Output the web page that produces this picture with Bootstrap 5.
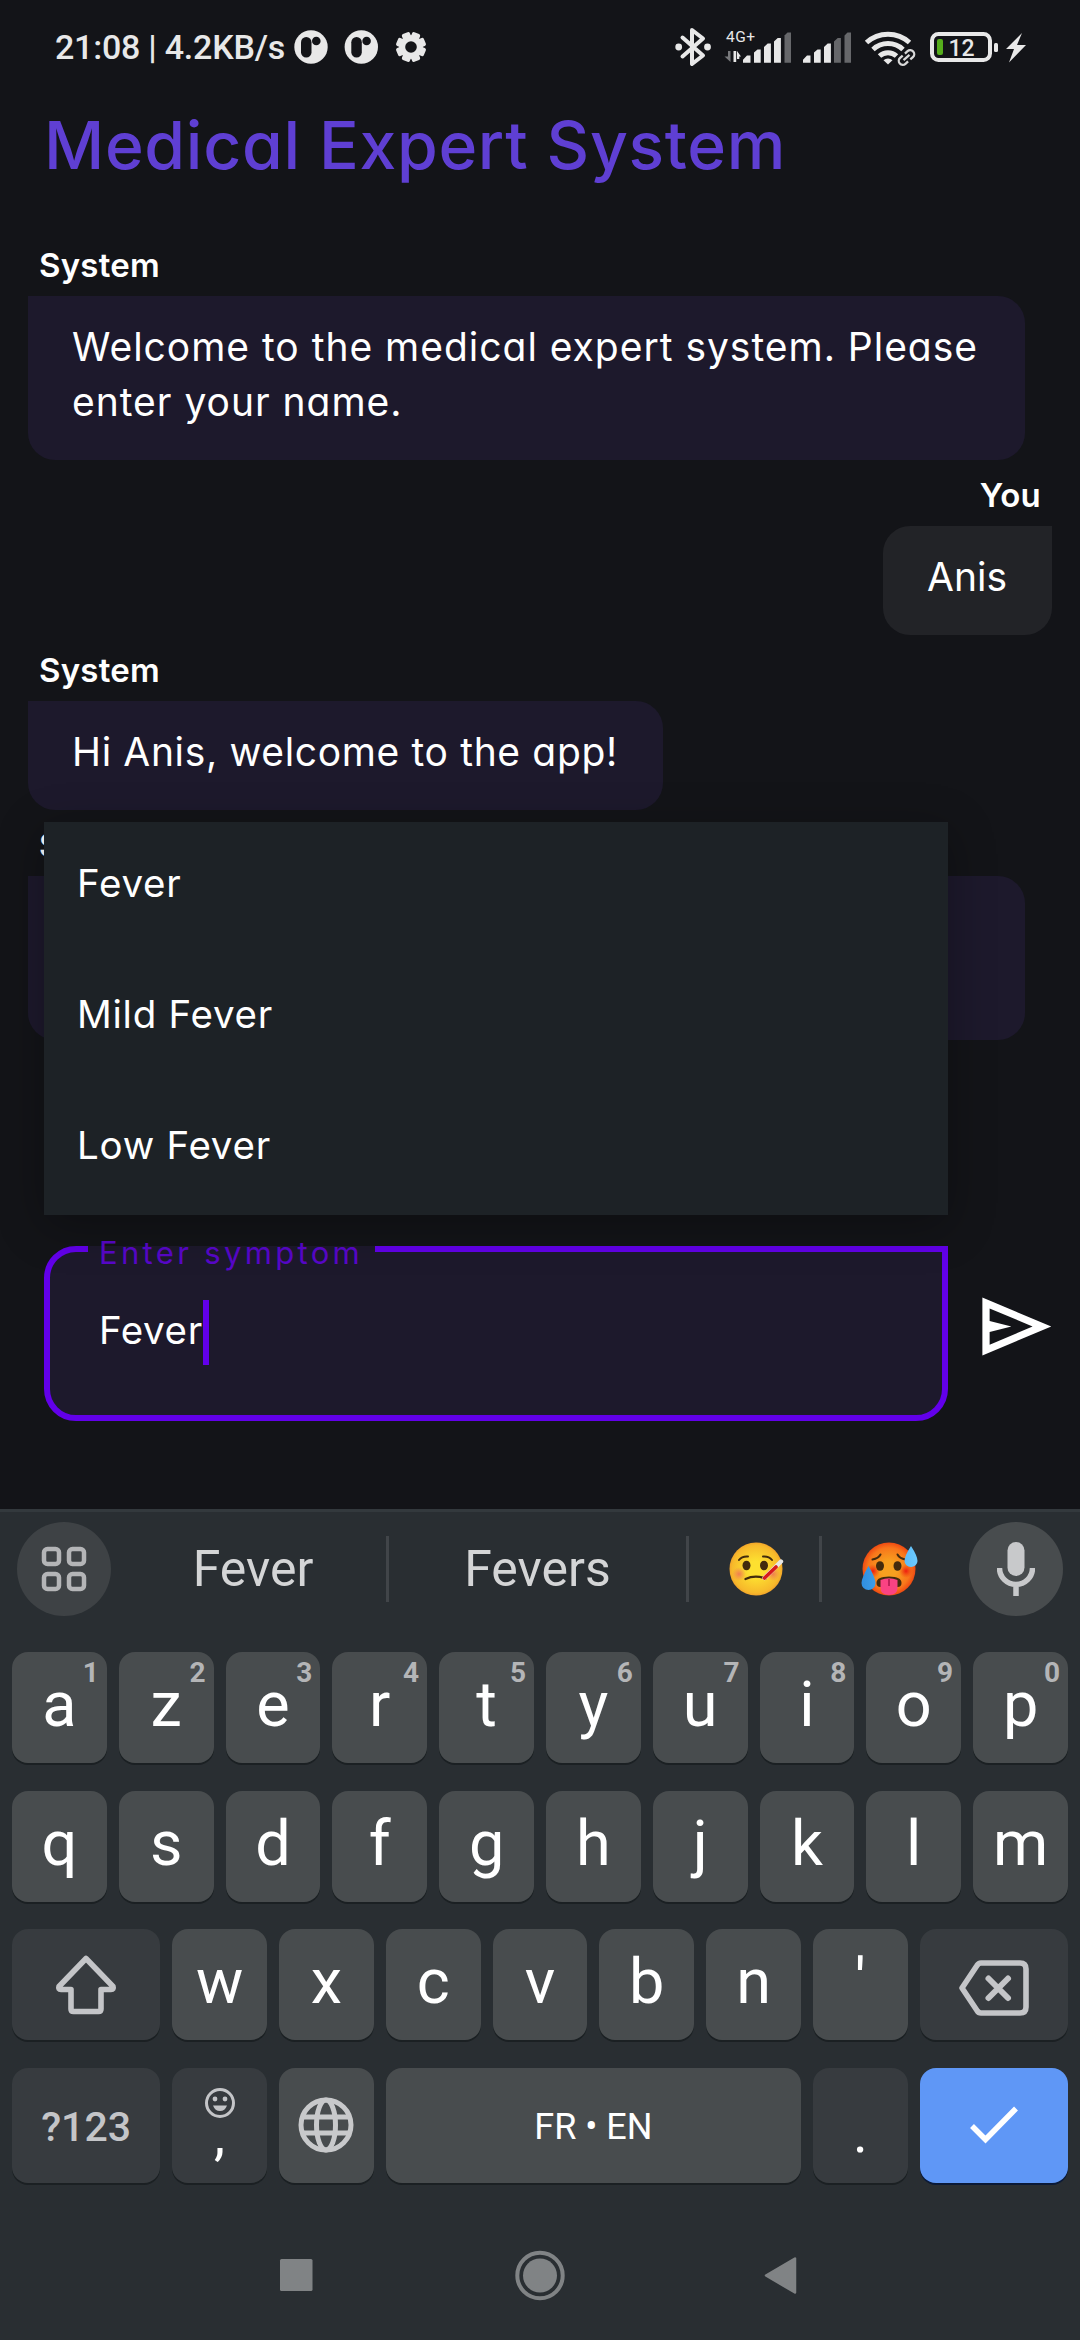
<!DOCTYPE html>
<html lang="en">
<head>
<meta charset="utf-8">
<meta name="viewport" content="width=device-width, initial-scale=1">
<title>Medical Expert System</title>
<link href="https://cdn.jsdelivr.net/npm/bootstrap@5.3.0/dist/css/bootstrap.min.css" rel="stylesheet">
<style>
body{background:#131418;color:#fff;font-family:Roboto,sans-serif}
.phone{width:1080px;height:2340px;overflow:hidden}
.geo{font-family:Inter,sans-serif;font-feature-settings:"cv11" 1;white-space:nowrap}
.status{height:94px;color:#e8e8e8;font-size:34px;font-weight:500;line-height:40px;padding-left:55px;letter-spacing:-.23px}
.app-title{font-size:66px;line-height:80px;font-weight:500;color:#5f3fd3;padding:11px 0 0 44px;height:150px;letter-spacing:.68px}
.who{font-size:33px;line-height:42px;font-weight:600;padding:0 11px;margin-bottom:10px;letter-spacing:.24px}
.bubble{font-size:39px;line-height:55px;padding:23px 44px 31px;margin-bottom:14px;background:#1d192c;border-radius:0 27px 27px 27px;letter-spacing:.98px}
.bubble.full{width:997px;min-height:164px}
.bubble.hi{width:635px;letter-spacing:.65px}
.bubble.mine{width:169px;background:#222327;border-radius:27px 0 27px 27px;letter-spacing:0}
.chat{padding:0 28px;height:1002px}
.suggest{left:44px;top:822px;width:904px;height:393px;background:#1d2226;box-shadow:0 10px 44px rgba(0,0,0,.3);z-index:2}
.suggest div{height:131px;padding:34px 33px;font-size:38.5px;line-height:55px;letter-spacing:.74px}
.composer{padding-left:44px;height:263px}
.composer svg{margin:37px 0 0 23px}
.field{width:904px;height:175px;border:6px solid #6200ea;border-radius:32px 0 32px 32px;background:#1d192c;padding:48px 49px;font-size:38.5px;line-height:61px;letter-spacing:.6px}
.field-label{left:38px;top:-19px;width:287px;padding-left:11px;font-size:31px;line-height:39px;letter-spacing:3.33px;color:#5807c9;background:linear-gradient(transparent 13px,#1d192c 13px,#1d192c 19px,transparent 19px)}
.caret{width:6px;height:65px;background:#6200ea}
.keyboard{height:831px;background:#292e32;border-top:3px solid #33393d}
.strip{height:140px;padding:10px 17px 0}
.round{width:94px;height:94px;background:#3e4245}
.voice{background:#484c4e}
.sep{width:3px;height:66px;background:#414549}
.word{font-size:50px;color:#d4d5d6;line-height:98px}
.word-1{width:275px;padding-left:9px}
.word-2{width:297px}
.keys{padding:0 12px}
.krow{gap:12px;height:111px;margin-bottom:27.5px}
.krow.tall{height:115px}
.key{width:94.8px;background:#484c4e;border-radius:16px;box-shadow:0 2px 0 #1b2023;font-size:63px;line-height:106px}
.dim{background:#373b3f}
.wide{width:148.2px}
.num{right:8px;top:5px;font-size:28px;line-height:32px;font-weight:700;color:#b4b5b7}
.go{background:#5f97f6;box-shadow:0 2px 0 #0b1a38}
.sym{font-size:41px;font-weight:500;line-height:118px;color:#c4c5c8}
.comma{font-size:56px;line-height:60px}
.comma svg{margin-top:19px}
.comma span{margin-top:-14px}
.space{font-size:36px;line-height:119px}
.dot{font-size:56px;line-height:130px}
.navbtns{padding-top:35px}
svg{display:block;flex:none}
</style>
</head>
<body>
<div class="phone position-relative d-flex flex-column">
  <header class="status d-flex align-items-center">
    <span class="text-nowrap">21:08 | 4.2KB/s</span>
    <svg class="position-absolute top-0 start-0" width="1080" height="94" viewBox="0 0 1080 94" fill="#e8e8e8" letter-spacing="0">
      <g id="app"><circle cx="311" cy="47" r="16.7"/><rect x="301" y="37" width="10.5" height="20.5" rx="5.2" fill="#131418"/><circle cx="316.3" cy="41" r="4.3" fill="#131418"/></g>
      <use href="#app" x="50.3"/>
      <g transform="translate(411 47)"><circle r="8.3" fill="none" stroke="#e8e8e8" stroke-width="7"/><rect x="-4.3" y="-15" width="8.6" height="30" rx="1.8" transform="rotate(22.5)"/><rect x="-4.3" y="-15" width="8.6" height="30" rx="1.8" transform="rotate(67.5)"/><rect x="-4.3" y="-15" width="8.6" height="30" rx="1.8" transform="rotate(112.5)"/><rect x="-4.3" y="-15" width="8.6" height="30" rx="1.8" transform="rotate(157.5)"/><circle r="5.8" fill="#131418"/></g>
      <path d="M682.5 37.5 703 55.500 692 64V30L703 38.500 682.5 56.500" fill="none" stroke="#e8e8e8" stroke-width="4" stroke-linejoin="round" stroke-linecap="round"/>
      <circle cx="678.700" cy="47" r="3.400"/><circle cx="707.500" cy="47" r="3.400"/>
      <text x="726" y="42" font-size="15.500" font-weight="400" textLength="29">4G+</text>
      <path d="M728 51h2.500v11L724.500 56.500H728z" fill="#77787b"/><path d="M733.500 51h2.700v11h-2.700zM737 51l4 5.500h-1.700V59H737z"/>
      <path d="M743 62.700v-3l4-4.200h3.500v7.200zM754 62.700V52.500l3.500-3h3.200v13.200zM764 62.700V47l3.700-3.500h3.200v19.200zM774 62.700V41.500l3.700-3.500h3.200v24.700z"/>
      <path d="M784.500 62.700V35.500l3-3h3.500v30.200z" fill="#66676a"/>
      <path d="M803 62.700v-3l4-4.200h3.500v7.200zM814 62.700V52.500l3.500-3h3.200v13.200zM824 62.700V47l3.700-3.500h3.200v19.200z"/>
      <path d="M834 62.700V41.500l3.700-3.500h3.200v24.700zM844.500 62.700V35.500l3-3h3.500v30.200z" fill="#66676a"/>
      <g fill="none" stroke="#e8e8e8" stroke-width="5"><path d="M866.500 42.500a32 32 0 0 1 43 0"/><path d="M873 49.500a22 22 0 0 1 30 0"/><path d="M879.500 56a12.500 12.500 0 0 1 17 0"/></g>
      <path d="M888 64.500l-4.500-4.200a6.500 6.500 0 0 1 9 0z"/>
      <g transform="translate(906.5 57.5) rotate(-42)"><rect x="-11" y="-6" width="22" height="12" rx="6" fill="#131418"/><g fill="none" stroke="#d8d8d8" stroke-width="2.300"><path d="M-1.500-4h-3.500a4 4 0 0 0 0 8h3.500M1.500-4h3.500a4 4 0 0 1 0 8h-3.500M-4 0h8"/></g></g>
      <rect x="932" y="34" width="58" height="26" rx="6.500" fill="none" stroke="#e8e8e8" stroke-width="4"/>
      <rect x="937" y="39" width="6" height="16" rx="2" fill="#56ae1c"/><rect x="994" y="43" width="4" height="9" rx="1.500"/>
      <text x="948.500" y="55.700" font-size="23" font-weight="500" textLength="26">12</text>
      <path d="M1022 33l-16 16h8l-5 13.500 17-17.500h-9z"/>
    </svg>
  </header>
  <h1 class="app-title geo m-0">Medical Expert System</h1>

  <main class="chat d-flex flex-column align-items-start">
    <div class="who geo">System</div>
    <div class="bubble full geo">Welcome to the medical expert system. Please<br>enter your name.</div>
    <div class="who geo align-self-end">You</div>
    <div class="bubble mine geo align-self-end">Anis</div>
    <div class="who geo">System</div>
    <div class="bubble hi geo">Hi Anis, welcome to the app!</div>
    <div class="who geo">S</div>
    <div class="bubble full geo"></div>
  </main>

  <div class="suggest geo position-absolute">
    <div>Fever</div>
    <div>Mild Fever</div>
    <div>Low Fever</div>
  </div>

  <section class="composer d-flex">
    <div class="field geo position-relative d-flex">
      <span class="field-label position-absolute">Enter symptom</span>
      <span>Fever</span><span class="caret"></span>
    </div>
    <svg width="88" height="87" viewBox="0 0 24 24" fill="#fff"><path d="M3 20V4l19 8zm2-3 11.850-5L5 7v3.500l6 1.500-6 1.500z"/></svg>
  </section>

  <section class="keyboard">
    <div class="strip d-flex align-items-start">
      <div class="round rounded-circle d-flex align-items-center justify-content-center">
        <svg width="46" height="46" fill="none" stroke="#b4b5b7" stroke-width="4.500"><rect x="3" y="3" width="15" height="15" rx="3.500"/><rect x="28" y="3" width="15" height="15" rx="3.500"/><rect x="3" y="28" width="15" height="15" rx="3.500"/><rect x="28" y="28" width="15" height="15" rx="3.500"/></svg>
      </div>
      <div class="d-flex align-items-center" style="height:94px">
        <div class="word word-1 text-center">Fever</div><div class="sep"></div>
        <div class="word word-2 text-center">Fevers</div><div class="sep"></div>
        <svg style="margin:0 35px 0 39px" width="56" height="56" viewBox="0 0 56 56">
          <defs><radialGradient id="y"><stop offset=".3" stop-color="#fde030"/><stop offset=".9" stop-color="#f7b92b"/><stop offset="1" stop-color="#f2a52a"/></radialGradient><radialGradient id="b"><stop offset="0" stop-color="#ee6b5a" stop-opacity=".8"/><stop offset="1" stop-color="#ee7a5a" stop-opacity="0"/></radialGradient></defs>
          <circle cx="28" cy="28" r="26.500" fill="url(#y)"/><circle cx="11" cy="33" r="7" fill="url(#b)"/><circle cx="45" cy="33" r="7" fill="url(#b)"/>
          <ellipse cx="18.500" cy="24.500" rx="4" ry="4.800" fill="#422b0d"/><ellipse cx="36" cy="24.500" rx="4" ry="4.800" fill="#422b0d"/>
          <path d="M11 19q3-4 9-3.500M35 15.500q6-.5 9 3.500" fill="none" stroke="#422b0d" stroke-width="2" stroke-linecap="round"/>
          <path d="M17.500 38q9.500-4.500 20-.5" fill="none" stroke="#422b0d" stroke-width="2.300" stroke-linecap="round"/>
          <path d="M36.500 37 53 20.500" stroke="#e6e6e6" stroke-width="4.400" stroke-linecap="round"/><path d="M36.500 37 48 26" stroke="#d81b1b" stroke-width="3.600" stroke-linecap="round"/>
        </svg>
        <div class="sep"></div>
        <svg style="margin:0 51px 0 39px" width="57" height="56" viewBox="0 0 57 56">
          <defs><radialGradient id="r"><stop offset=".3" stop-color="#f7a01f"/><stop offset=".8" stop-color="#f8761b"/><stop offset="1" stop-color="#ee4a12"/></radialGradient><radialGradient id="c"><stop offset="0" stop-color="#ee1c10"/><stop offset="1" stop-color="#f03a10" stop-opacity="0"/></radialGradient><linearGradient id="d" x2="1"><stop offset="0" stop-color="#2f8ee0"/><stop offset="1" stop-color="#6ccbff"/></linearGradient></defs>
          <circle cx="28" cy="28" r="26.500" fill="url(#r)"/><circle cx="12" cy="30" r="7" fill="url(#c)"/><circle cx="45" cy="30" r="7" fill="url(#c)"/>
          <ellipse cx="19" cy="25" rx="4" ry="4.800" fill="#422b0d"/><ellipse cx="36.500" cy="25" rx="4" ry="4.800" fill="#422b0d"/>
          <path d="M11.500 18.500q6-1 8-5M36.500 13.500q2 4 8 5" fill="none" stroke="#422b0d" stroke-width="2" stroke-linecap="round"/>
          <path d="M15.500 42q0-6.500 12.500-6.500t12.500 6.500q0 4-4 4h-17q-4 0-4-4z" fill="#422b0d"/><path d="M19.500 39q8.500-3.500 17 0v8q0 7-8.500 7t-8.500-7z" fill="#fa4383"/><path d="M28 38v7" stroke="#b01a50" stroke-width="1.600"/>
          <path d="M7.500 25q7 12 7 17a7 7 0 0 1-14 0q0-5 7-17zM50 5q6.500 10 6.500 15a6.500 6 0 0 1-13 0q0-5 6.500-15z" fill="url(#d)"/>
        </svg>
      </div>
      <div class="round voice rounded-circle d-flex align-items-center justify-content-center">
        <svg width="38" height="54" viewBox="0 0 38 54"><rect x="10.500" width="17" height="34" rx="8.500" fill="#c8c9cb"/><path d="M2.500 26a16.500 16.500 0 0 0 33 0M19 43v11" fill="none" stroke="#c8c9cb" stroke-width="5.500"/></svg>
      </div>
    </div>
    <div class="keys text-center">
      <div class="krow d-flex">
        <div class="key position-relative">a<span class="num position-absolute">1</span></div><div class="key position-relative">z<span class="num position-absolute">2</span></div><div class="key position-relative">e<span class="num position-absolute">3</span></div><div class="key position-relative">r<span class="num position-absolute">4</span></div><div class="key position-relative">t<span class="num position-absolute">5</span></div><div class="key position-relative">y<span class="num position-absolute">6</span></div><div class="key position-relative">u<span class="num position-absolute">7</span></div><div class="key position-relative">i<span class="num position-absolute">8</span></div><div class="key position-relative">o<span class="num position-absolute">9</span></div><div class="key position-relative">p<span class="num position-absolute">0</span></div>
      </div>
      <div class="krow d-flex">
        <div class="key">q</div><div class="key">s</div><div class="key">d</div><div class="key">f</div><div class="key">g</div><div class="key">h</div><div class="key">j</div><div class="key">k</div><div class="key">l</div><div class="key">m</div>
      </div>
      <div class="krow d-flex">
        <div class="key dim wide d-flex justify-content-center"><svg width="62" height="62" viewBox="0 0 62 62" style="margin-top:25px" fill="none" stroke="#c4c5c8" stroke-width="5.600" stroke-linejoin="round"><path d="M31 4.500 58 32.500q1 3-2 3H46V55q0 2.500-2.500 2.500h-25Q16 57.500 16 55V35.500H6q-3 0-2-3z"/></svg></div>
        <div class="key">w</div><div class="key">x</div><div class="key">c</div><div class="key">v</div><div class="key">b</div><div class="key">n</div><div class="key">'</div>
        <div class="key dim wide d-flex justify-content-center"><svg width="70" height="56" viewBox="0 0 70 56" style="margin-top:31px" fill="none" stroke="#c4c5c8" stroke-width="5.600" stroke-linejoin="round"><path d="M22 3H61q6 0 6 6V47q0 6-6 6H22q-2.500 0-4-2.500L3 28 18 5.500Q19.500 3 22 3z"/><path d="M29.500 18.500 49 38M49 18.500 29.500 38" stroke-linecap="round" stroke-width="6"/></svg></div>
      </div>
      <div class="krow tall d-flex">
        <div class="key dim wide sym">?123</div>
        <div class="key dim comma d-flex flex-column align-items-center"><svg width="32" height="32" viewBox="0 0 32 32"><circle cx="16" cy="16" r="13.500" fill="none" stroke="#c4c5c8" stroke-width="3"/><circle cx="11" cy="12" r="2.400" fill="#c4c5c8"/><circle cx="21" cy="12" r="2.400" fill="#c4c5c8"/><path d="M9 18.500h14q-2 5.500-7 5.500t-7-5.500z" fill="#c4c5c8"/></svg><span>,</span></div>
        <div class="key d-flex align-items-center justify-content-center"><svg width="56" height="56" viewBox="0 0 56 56" fill="none" stroke="#c8c9cb" stroke-width="5"><circle cx="28" cy="28" r="25"/><ellipse cx="28" cy="28" rx="9.500" ry="25"/><path d="M5 20h46M5 36h46"/></svg></div>
        <div class="key space flex-grow-1">FR • EN</div>
        <div class="key dim dot">.</div>
        <div class="key go wide d-flex align-items-center justify-content-center"><svg width="48" height="38" viewBox="0 0 48 38" fill="none" stroke="#fff" stroke-width="5.500"><path d="M2 20 15.500 33.500 46 2.500"/></svg></div>
      </div>
    </div>
    <nav class="navbtns d-flex justify-content-center">
      <svg width="560" height="60" viewBox="260 2245 560 60" fill="#808385"><rect x="280" y="2259" width="32.500" height="32" rx="1.500"/><circle cx="540" cy="2275.500" r="22.700" fill="none" stroke="#808385" stroke-width="4"/><circle cx="540" cy="2275.500" r="17"/><path d="M766 2275.500 795 2258.500v34z" stroke="#808385" stroke-width="2.500" stroke-linejoin="round"/></svg>
    </nav>
  </section>
</div>
<script src="https://cdn.jsdelivr.net/npm/bootstrap@5.3.0/dist/js/bootstrap.bundle.min.js"></script>
</body>
</html>
